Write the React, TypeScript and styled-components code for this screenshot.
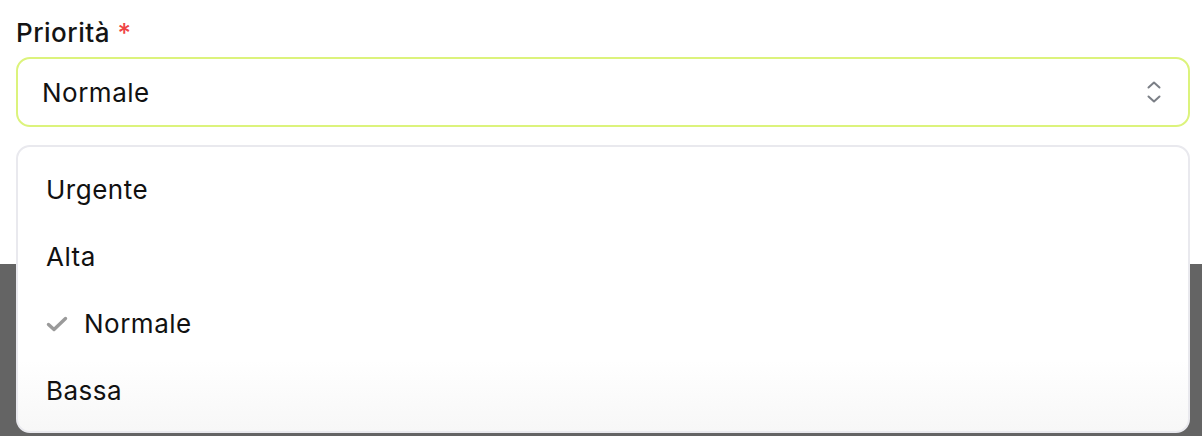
import React from 'react'
import styled, { createGlobalStyle } from 'styled-components'

const options = ['Urgente', 'Alta', 'Normale', 'Bassa']
const selected = 'Normale'

export default function App() {
    return (
        <>
            <GlobalStyle />
            <Page>
                <Panel>
                    <Field>
                        <Label>
                            Priorità <Required>*</Required>
                        </Label>
                        <SelectBox>
                            <SelectValue>{selected}</SelectValue>
                            <ChevronsIcon />
                        </SelectBox>
                    </Field>
                    <Menu>
                        {options.map((option) => (
                            <MenuItem key={option} $selected={option === selected}>
                                {option === selected && <CheckIcon />}
                                {option}
                            </MenuItem>
                        ))}
                    </Menu>
                </Panel>
                <Backdrop />
            </Page>
        </>
    )
}

function ChevronsIcon() {
    return (
        <Chevrons width='16' height='24' viewBox='0 0 16 24' fill='none'>
            <path d='M2.5 7.5 L8 2.5 L13.5 7.5' stroke='#7b7f86' strokeWidth='2' strokeLinecap='round' strokeLinejoin='round' />
            <path d='M2.5 16.5 L8 21.5 L13.5 16.5' stroke='#7b7f86' strokeWidth='2' strokeLinecap='round' strokeLinejoin='round' />
        </Chevrons>
    )
}

function CheckIcon() {
    return (
        <Check width='22' height='16' viewBox='0 0 22 16' fill='none'>
            <path d='M2.5 8.5 L8 13.5 L19.5 2.5' stroke='#9a9a9a' strokeWidth='3.4' strokeLinecap='round' strokeLinejoin='round' />
        </Check>
    )
}

const GlobalStyle = createGlobalStyle`
    html, body {
        margin: 0;
        padding: 0;
        background: #ffffff;
    }
    body {
        font-family: Inter, 'Noto Sans', 'Liberation Sans', sans-serif;
        color: #111111;
        letter-spacing: 0.5px;
    }
`

const Page = styled.div`
    display: flex;
    flex-direction: column;
    width: 1202px;
    height: 436px;
    overflow: hidden;
`

const Panel = styled.div`
    position: relative;
    height: 264px;
    padding: 0 12px 0 16px;
    box-sizing: border-box;
    background: #ffffff;
`

const Backdrop = styled.div`
    flex: 1;
    background: #646464;
`

const Field = styled.div`
    display: flex;
    flex-direction: column;
    gap: 9px;
    padding-top: 18px;
`

const Label = styled.label`
    font-size: 26px;
    font-weight: 500;
    line-height: 30px;
    color: #141414;
`

const Required = styled.span`
    color: #ef4444;
`

const SelectBox = styled.div`
    display: flex;
    align-items: center;
    justify-content: space-between;
    height: 70px;
    padding: 0 26px 0 24px;
    box-sizing: border-box;
    border: 2px solid #dcf37c;
    border-radius: 14px;
    background: #ffffff;
`

const SelectValue = styled.span`
    font-size: 26px;
    color: #111111;
`

const Chevrons = styled.svg`
    display: block;
`

const Menu = styled.ul`
    position: absolute;
    top: 145px;
    left: 16px;
    right: 12px;
    height: 288px;
    margin: 0;
    padding: 9px 0;
    box-sizing: border-box;
    list-style: none;
    border: 2px solid #e9e9ee;
    border-radius: 14px;
    background: linear-gradient(to bottom, #ffffff 75%, #f7f7f7 100%);
    z-index: 10;
`

const MenuItem = styled.li<{ $selected: boolean }>`
    display: flex;
    align-items: center;
    gap: 16px;
    height: 67px;
    padding-left: 28px;
    font-size: 26px;
    color: #111111;
`

const Check = styled.svg`
    display: block;
`
